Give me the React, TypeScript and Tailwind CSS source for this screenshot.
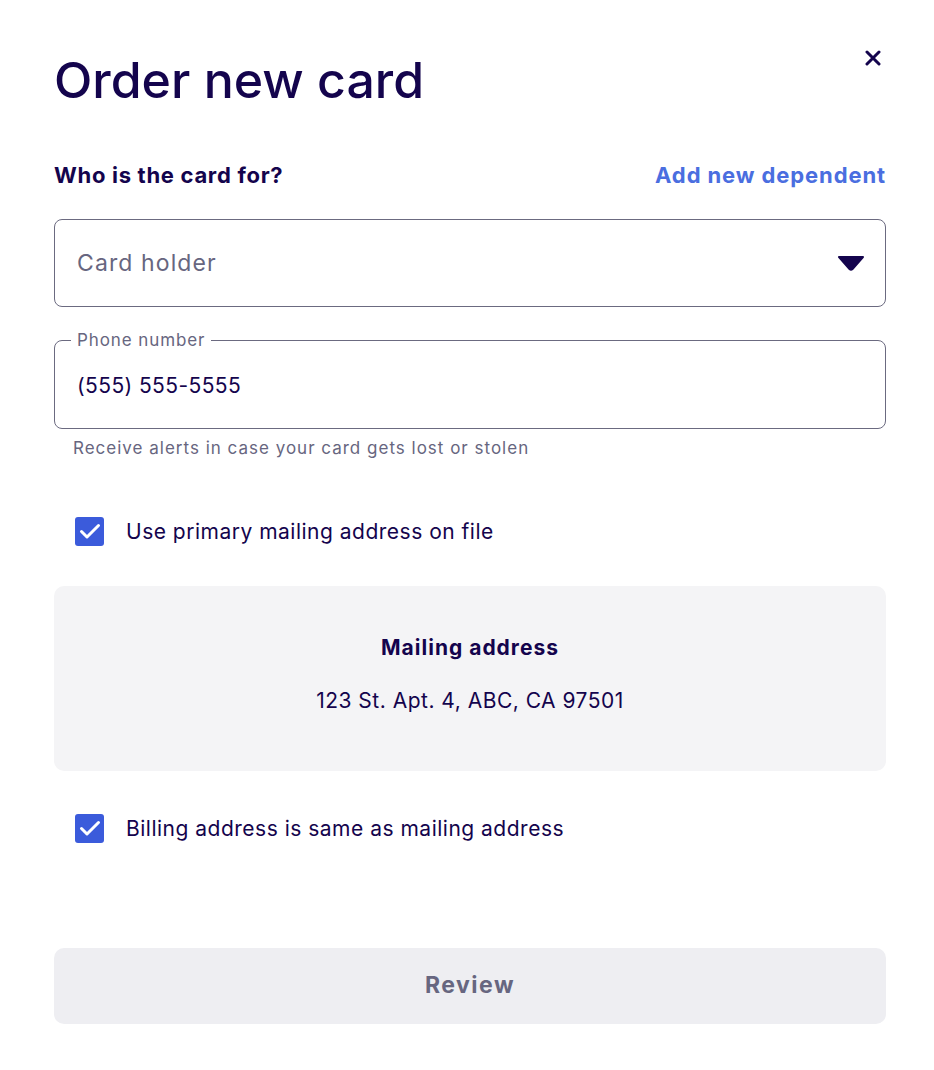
import React from "react";

function Check() {
  return (
    <div className="w-[29px] h-[29px] rounded-[3px] bg-[#3b5bdb] flex items-center justify-center shrink-0">
      <svg width="22" height="17" viewBox="0 0 22 17" fill="none">
        <path d="M2.5 8.5 L8 14 L19.5 2.5" stroke="white" strokeWidth="3" strokeLinecap="round" strokeLinejoin="round" />
      </svg>
    </div>
  );
}

export default function App() {
  return (
    <div className="w-[934px] h-[1070px] bg-white text-[#14044d]" style={{ fontFamily: "Inter, 'Noto Sans', sans-serif" }}>
      <div className="ml-[54px] w-[832px] pt-[48px]">
        <div className="flex justify-between items-start">
          <h1 className="text-[50px] leading-[64px] font-medium">Order new card</h1>
          <button className="-mt-[2px] mr-[1px] p-[4px]">
            <svg width="16" height="16" viewBox="0 0 16 16">
              <path d="M2 2 L14 14 M14 2 L2 14" stroke="#14044d" strokeWidth="3" strokeLinecap="round" />
            </svg>
          </button>
        </div>

        <div className="flex justify-between items-center mt-[47px]">
          <span className="text-[22px] font-bold tracking-[0.7px]">Who is the card for?</span>
          <span className="text-[22px] font-bold text-[#4a6ee0] tracking-[0.9px]">Add new dependent</span>
        </div>

        <div className="mt-[27px] h-[88px] border border-[#6b6a80] rounded-[8px] flex items-center justify-between pl-[22px] pr-[20px]">
          <span className="text-[23px] text-[#676680] tracking-[1.1px]">Card holder</span>
          <svg width="28" height="16" viewBox="0 0 28 16">
            <path d="M2 2 L26 2 L15.5 14 Q14 15.5 12.5 14 Z" fill="#14044d" stroke="#14044d" strokeWidth="2" strokeLinejoin="round" />
          </svg>
        </div>

        <fieldset className="h-[95px] border border-[#6b6a80] rounded-[8px] px-[16px] pb-[6px]" style={{ marginTop: 27 }}>
          <legend className="px-[6px] text-[17px] text-[#676680] leading-[12px] tracking-[0.9px]">Phone number</legend>
          <div className="text-[21px] pl-[6px] pt-[27px] leading-[26px] tracking-[0.4px]">(555) 555-5555</div>
        </fieldset>
        <div className="mt-[7px] ml-[19px] text-[17px] text-[#676680] tracking-[1px]">Receive alerts in case your card gets lost or stolen</div>

        <div className="mt-[54px] ml-[21px] flex items-center gap-[22px]">
          <Check />
          <span className="text-[21px] tracking-[0.5px]">Use primary mailing address on file</span>
        </div>

        <div className="mt-[39px] h-[185px] rounded-[10px] bg-[#f4f4f6] flex flex-col items-center pt-[47px]">
          <span className="text-[21px] font-bold leading-[30px] tracking-[1px]">Mailing address</span>
          <span className="text-[21px] mt-[23px] leading-[30px] tracking-[0.5px]">123 St. Apt. 4, ABC, CA 97501</span>
        </div>

        <div className="mt-[42px] ml-[21px] flex items-center gap-[22px]">
          <Check />
          <span className="text-[21px] tracking-[0.5px]">Billing address is same as mailing address</span>
        </div>

        <button className="mt-[103px] w-full h-[76px] rounded-[10px] bg-[#eeeef2] text-[23px] font-bold text-[#676680] tracking-[1.5px]">
          Review
        </button>
      </div>
    </div>
  );
}
